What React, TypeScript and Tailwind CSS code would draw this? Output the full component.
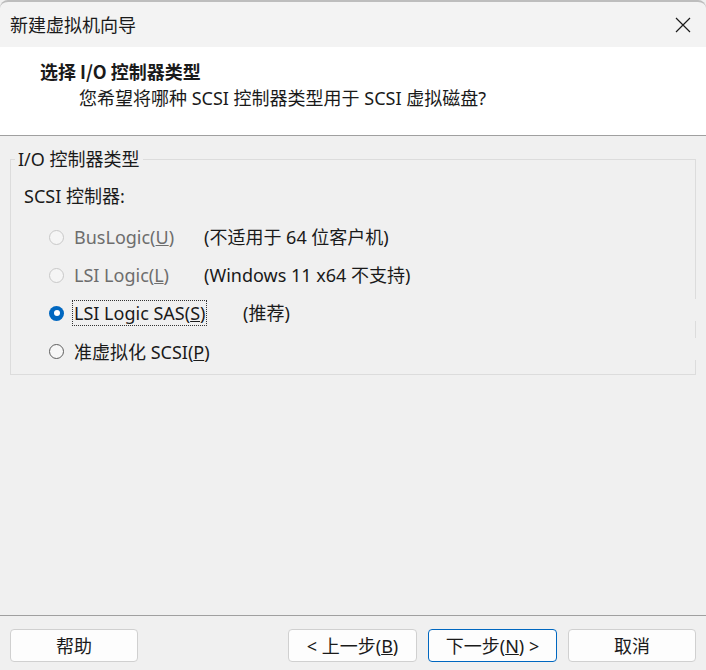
import React from "react";

const font = { fontFamily: '"Noto Sans", "Noto Sans CJK SC", sans-serif' };

function Radio({ checked, disabled }: { checked?: boolean; disabled?: boolean }) {
  if (checked) {
    return (
      <span className="w-[15px] h-[15px] rounded-full bg-[#0067c0] flex items-center justify-center shrink-0">
        <span className="w-[6px] h-[6px] rounded-full bg-white" />
      </span>
    );
  }
  return (
    <span
      className={
        "w-[15px] h-[15px] rounded-full border shrink-0 " +
        (disabled ? "border-[#c8c8c8] bg-[#f5f5f5]" : "border-[#5e5e5e] bg-[#f7f7f7]")
      }
    />
  );
}

function Btn({ children, primary, w }: { children: React.ReactNode; primary?: boolean; w: string }) {
  return (
    <button
      className={
        w +
        " h-[33px] rounded-[4px] bg-[#fdfdfd] text-[18px] leading-[24px] text-[#1a1a1a] flex items-center justify-center border " +
        (primary ? "border-[#0067c0]" : "border-[#d0d0d0]")
      }
    >
      {children}
    </button>
  );
}

export default function App() {
  return (
    <div className="w-[706px] h-[670px] bg-[#f0f0f0] flex flex-col text-[#1a1a1a] overflow-hidden" style={font}>
      <div className="h-[47px] shrink-0 bg-[#f3f3f3] border-t-2 border-[#bdbdbd] rounded-tl-[8px] rounded-tr-[8px] flex items-center justify-between pl-[10px] pr-[14px]">
        <span className="text-[18px] leading-[24px]">新建虚拟机向导</span>
        <svg width="16" height="16" viewBox="0 0 16 16" className="mr-[1px]">
          <path d="M1 1 L15 15 M15 1 L1 15" stroke="#1a1a1a" strokeWidth="1.2" />
        </svg>
      </div>
      <div className="h-[89px] shrink-0 bg-white border-b border-[#a0a0a0] pt-[12px]">
        <div className="pl-[40px] text-[18px] leading-[24px] font-bold" style={{ fontFamily: '"Noto Sans CJK SC", sans-serif' }}>选择 I/O 控制器类型</div>
        <div className="pl-[79px] mt-[3px] text-[18px] leading-[24px]">您希望将哪种 SCSI 控制器类型用于 SCSI 虚拟磁盘?</div>
      </div>
      <div className="flex-1 px-[10px] pt-[23px]">
        <div className="relative border border-[#dcdcdc] h-[216px] pt-[24px] pl-[13px]">
          <div className="absolute left-[4px] top-[-13px] bg-[#f0f0f0] px-[3px] text-[18px] leading-[24px]">I/O 控制器类型</div>
          <div className="absolute right-[-1px] top-[139px] w-[1px] h-[22px] bg-[#f0f0f0]" />
          <div className="absolute right-[-1px] top-[178px] w-[1px] h-[22px] bg-[#f0f0f0]" />
          <div className="text-[18px] leading-[24px]">SCSI 控制器:</div>
          <div className="mt-[10px] flex flex-col">
            <div className="h-[38px] flex items-center pl-[25px]">
              <Radio disabled />
              <span className="ml-[10px] w-[130px] text-[#6d6d6d] text-[18px] leading-[24px]">BusLogic(<u>U</u>)</span>
              <span className="text-[18px] leading-[24px]">(不适用于 64 位客户机)</span>
            </div>
            <div className="h-[38px] flex items-center pl-[25px]">
              <Radio disabled />
              <span className="ml-[10px] w-[130px] text-[#6d6d6d] text-[18px] leading-[24px]">LSI Logic(<u>L</u>)</span>
              <span className="text-[18px] leading-[24px]">(Windows 11 x64 不支持)</span>
            </div>
            <div className="h-[38px] flex items-center pl-[25px]">
              <Radio checked />
              <span className="ml-[10px] w-[169px] text-[18px] leading-[24px]">
                <span className="outline-1 outline-dotted outline-[#333] -ml-[1px] px-[1px]">LSI Logic SAS(<u>S</u>)</span>
              </span>
              <span className="text-[18px] leading-[24px]">(推荐)</span>
            </div>
            <div className="h-[39px] flex items-center pl-[25px]">
              <Radio />
              <span className="ml-[10px] text-[18px] leading-[24px]">准虚拟化 SCSI(<u>P</u>)</span>
            </div>
          </div>
        </div>
      </div>
      <div className="h-[55px] shrink-0 border-t border-[#a0a0a0] flex items-start pt-[13px] px-[10px]">
        <Btn w="w-[128px]">帮助</Btn>
        <div className="flex-1" />
        <div className="flex gap-[11px]">
          <Btn w="w-[129px]">&lt; 上一步(<u>B</u>)</Btn>
          <Btn w="w-[129px]" primary>下一步(<u>N</u>) &gt;</Btn>
          <Btn w="w-[128px]">取消</Btn>
        </div>
      </div>
    </div>
  );
}
